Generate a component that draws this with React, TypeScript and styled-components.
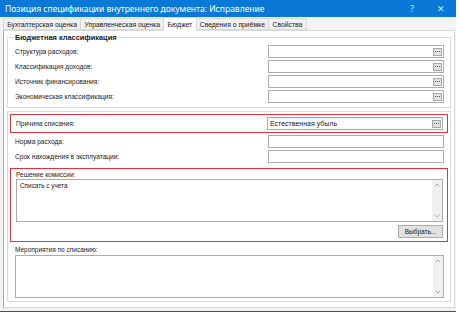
import React from "react";
import styled, { createGlobalStyle } from "styled-components";

const Global = createGlobalStyle`
  html, body { margin: 0; padding: 0; background: #ffffff; }
  body { font-family: "Liberation Sans", Arial, sans-serif; }
  * { box-sizing: border-box; }
`;

const Window = styled.div`
  width: 456px;
  height: 312px;
  display: flex;
  flex-direction: column;
  background: #f3f3f3;
  border-bottom: 1px solid #b3213f;
`;

const TitleBar = styled.div`
  height: 17px;
  flex: none;
  background: #0a78d7;
  color: #ffffff;
  display: flex;
  align-items: center;
  padding-left: 5px;
  font-family: "Noto Sans", sans-serif;
  font-size: 8.5px;
`;

const TitleText = styled.div`
  flex: 1;
  white-space: nowrap;
`;

const TitleButton = styled.div<{ $w: number }>`
  width: ${(p) => p.$w}px;
  text-align: center;
  font-size: 9px;
  color: #d8e8f8;
`;

const TabStrip = styled.div`
  height: 13px;
  flex: none;
  display: flex;
  align-items: flex-end;
  padding-left: 3px;
`;

const Tab = styled.div<{ $active?: boolean }>`
  height: ${(p) => (p.$active ? 14 : 12)}px;
  margin-bottom: ${(p) => (p.$active ? -1 : 0)}px;
  padding: 0 3.3px;
  background: ${(p) => (p.$active ? "#ffffff" : "#f0f0f0")};
  border: 1px solid #d9d9d9;
  border-bottom: ${(p) => (p.$active ? "none" : "1px solid #d9d9d9")};
  margin-right: -1px;
  font-size: 6.8px;
  color: #1a1a1a;
  display: flex;
  align-items: center;
  white-space: nowrap;
  position: relative;
  z-index: ${(p) => (p.$active ? 1 : 0)};
`;

const Panel = styled.div`
  flex: 1;
  margin: 0 1px 3px 3px;
  background: #ffffff;
  border: 1px solid #d9d9d9;
  border-left-color: #8fb0d8;
  padding: 2px 3px 3px 3px;
  display: flex;
  flex-direction: column;
  gap: 3px;
`;

const Group = styled.fieldset<{ $pt: number }>`
  margin: 0;
  border: 1px solid #dcdcdc;
  padding: ${(p) => p.$pt}px 6px 3px 7px;
  min-width: 0;
  display: flex;
  flex-direction: column;
`;

const Legend = styled.legend`
  font-weight: bold;
  font-size: 7.4px;
  color: #1a1a1a;
  padding: 0 1px;
  margin-left: -1px;
  line-height: 9px;
`;

const Row = styled.div<{ $h?: number; $mt?: number }>`
  display: grid;
  grid-template-columns: 1fr 176px;
  align-items: center;
  height: ${(p) => p.$h ?? 15}px;
  margin-top: ${(p) => p.$mt ?? 0}px;
`;

const Label = styled.div`
  font-size: 6.6px;
  color: #1a1a1a;
  white-space: nowrap;
`;

const SmallLabel = styled.div<{ $mt: number }>`
  font-size: 6.5px;
  color: #1a1a1a;
  white-space: nowrap;
  height: 9px;
  line-height: 9px;
  margin-top: ${(p) => p.$mt}px;
`;

const Input = styled.div`
  height: 13px;
  border: 1px solid #acacac;
  background: #ffffff;
  display: flex;
  align-items: center;
  padding: 0 1px 0 2px;
  font-size: 7px;
  color: #1a1a1a;
`;

const InputText = styled.div`
  flex: 1;
  white-space: nowrap;
`;

const Dots = styled.div`
  width: 9px;
  height: 8px;
  background: #e3e3e3;
  border: 1px solid #a8a8a8;
  display: flex;
  align-items: center;
  justify-content: center;
`;

const RedBox = styled.div<{ $h: number; $mt: number }>`
  height: ${(p) => p.$h}px;
  margin: ${(p) => p.$mt}px -4px 0 -5px;
  border: 1px solid #e8313d;
  padding: 0 4px 0 5px;
  display: flex;
  flex-direction: column;
`;

const TextBox = styled.div<{ $mt?: number }>`
  height: 43px;
  margin-top: ${(p) => p.$mt ?? 0}px;
  border: 1px solid #acacac;
  background: #ffffff;
  display: flex;
`;

const TextContent = styled.div`
  flex: 1;
  font-size: 6.4px;
  color: #1a1a1a;
  padding: 2px 3px;
`;

const ScrollBar = styled.div`
  width: 10px;
  background: #f0f0f0;
  display: flex;
  flex-direction: column;
  justify-content: space-between;
  align-items: center;
  padding: 3px 0;
`;

const ButtonRow = styled.div`
  display: flex;
  justify-content: flex-end;
  margin-top: 3px;
`;

const Button = styled.div`
  width: 45px;
  height: 13px;
  background: #e1e1e1;
  border: 1px solid #adadad;
  font-size: 6.5px;
  color: #1a1a1a;
  display: flex;
  align-items: center;
  justify-content: center;
`;

const Ellipsis = () => (
  <Dots>
    <svg width="5" height="1" viewBox="0 0 5 1">
      <rect x="0" y="0" width="1" height="1" fill="#555" />
      <rect x="2" y="0" width="1" height="1" fill="#555" />
      <rect x="4" y="0" width="1" height="1" fill="#555" />
    </svg>
  </Dots>
);

const Arrow = ({ up }: { up?: boolean }) => (
  <svg width="6" height="4" viewBox="0 0 6 4">
    <polyline
      points={up ? "0.5,3.5 3,1 5.5,3.5" : "0.5,0.5 3,3 5.5,0.5"}
      fill="none"
      stroke="#a6a6a6"
      strokeWidth="0.9"
    />
  </svg>
);

const Field = ({ label, value, dots }: { label: string; value?: string; dots?: boolean }) => (
  <>
    <Label>{label}</Label>
    <Input>
      <InputText>{value}</InputText>
      {dots && <Ellipsis />}
    </Input>
  </>
);

const Memo = ({ text, mt }: { text?: string; mt?: number }) => (
  <TextBox $mt={mt}>
    <TextContent>{text}</TextContent>
    <ScrollBar>
      <Arrow up />
      <Arrow />
    </ScrollBar>
  </TextBox>
);

export default function App() {
  return (
    <>
      <Global />
      <Window>
        <TitleBar>
          <TitleText>Позиция спецификации внутреннего документа: Исправление</TitleText>
          <TitleButton $w={28}>?</TitleButton>
          <TitleButton $w={30}>✕</TitleButton>
        </TitleBar>
        <TabStrip>
          <Tab>Бухгалтерская оценка</Tab>
          <Tab>Управленческая оценка</Tab>
          <Tab $active>Бюджет</Tab>
          <Tab>Сведения о приёмке</Tab>
          <Tab>Свойства</Tab>
        </TabStrip>
        <Panel>
          <Group $pt={2}>
            <Legend>Бюджетная классификация</Legend>
            <Row>
              <Field label="Структура расходов:" dots />
            </Row>
            <Row>
              <Field label="Классификация доходов:" dots />
            </Row>
            <Row>
              <Field label="Источник финансирования:" dots />
            </Row>
            <Row>
              <Field label="Экономическая классификация:" dots />
            </Row>
          </Group>
          <Group $pt={2}>
            <RedBox $h={19} $mt={0}>
              <Row $h={17}>
                <Field label="Причина списания:" value="Естественная убыль" dots />
              </Row>
            </RedBox>
            <Row $mt={1}>
              <Field label="Норма расхода:" />
            </Row>
            <Row>
              <Field label="Срок нахождения в эксплуатации:" />
            </Row>
            <RedBox $h={74} $mt={4}>
              <SmallLabel $mt={1}>Решение комиссии:</SmallLabel>
              <Memo text="Списать с учета" />
              <ButtonRow>
                <Button>Выбрать...</Button>
              </ButtonRow>
            </RedBox>
            <SmallLabel $mt={3}>Мероприятия по списанию:</SmallLabel>
            <Memo mt={1} />
          </Group>
        </Panel>
      </Window>
    </>
  );
}
